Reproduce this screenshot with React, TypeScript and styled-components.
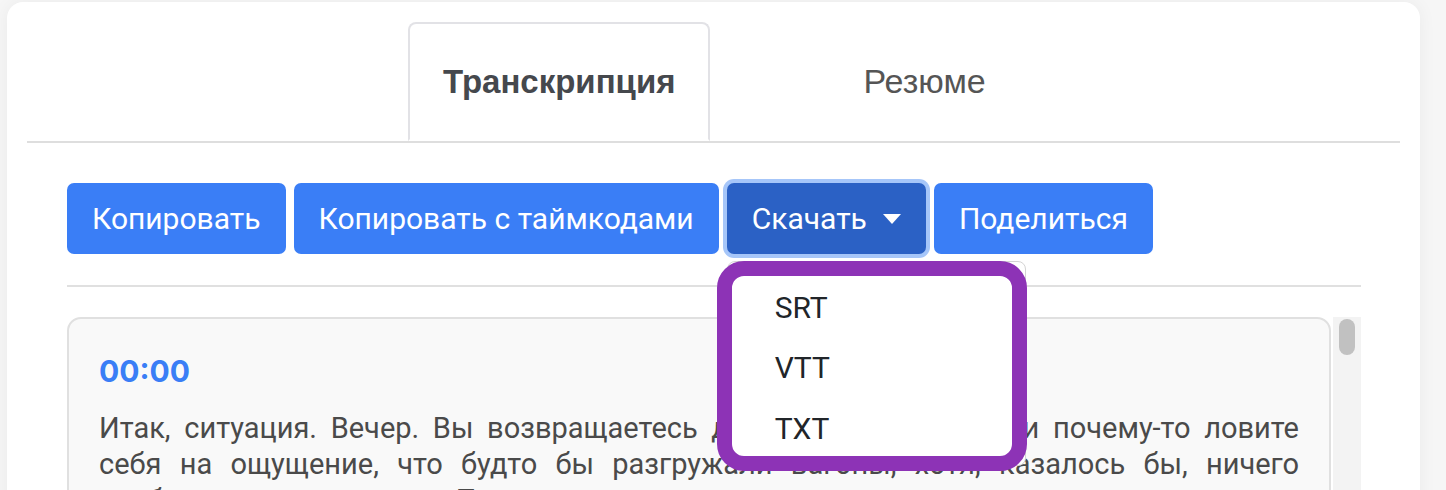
import React, { useState } from 'react';
import styled, { createGlobalStyle } from 'styled-components';

const GlobalStyle = createGlobalStyle`
  html, body {
    margin: 0;
    padding: 0;
    background: #f6f6f6;
    font-family: Roboto, "Noto Sans", sans-serif;
    overflow: hidden;
  }
`;

const Page = styled.div`
  padding: 2px 26px 0 7px;
  height: 488px;
  overflow: hidden;
`;

const Card = styled.div`
  background: #fff;
  border-radius: 16px;
  box-shadow: 0 0 18px rgba(0, 0, 0, 0.05);
  padding: 20px 20px 0 20px;
  min-height: 600px;
`;

// tabs
const TabBar = styled.div`
  display: flex;
  border-bottom: 2px solid #dedede;
  padding-left: 381px;
`;

const Tab = styled.div<{ $active?: boolean }>`
  height: 119px;
  display: flex;
  align-items: center;
  justify-content: center;
  box-sizing: border-box;
  font-family: "Liberation Sans", Arial, sans-serif;
  font-size: ${(p) => (p.$active ? '33px' : '34px')};
  font-weight: ${(p) => (p.$active ? 700 : 400)};
  color: ${(p) => (p.$active ? '#45484d' : '#555')};
  padding: 0 33px;
  margin-bottom: ${(p) => (p.$active ? '-2px' : '0')};
  border: 2px solid ${(p) => (p.$active ? '#e2e2e6' : 'transparent')};
  border-bottom-color: ${(p) => (p.$active ? '#fff' : 'transparent')};
  border-radius: 8px 8px 0 0;
  background: ${(p) => (p.$active ? '#fff' : 'transparent')};
  & + & {
    margin-left: 118px;
  }
`;

// content
const Body = styled.div`
  padding: 40px 39px 0 40px;
`;

const Toolbar = styled.div`
  display: flex;
  gap: 8px;
  padding-bottom: 31px;
  border-bottom: 2px solid #e0e0e0;
`;

const Button = styled.button<{ $pressed?: boolean }>`
  height: 71px;
  box-sizing: border-box;
  border: none;
  border-radius: 7px;
  padding: 0 25px;
  font-family: Roboto, "Noto Sans", sans-serif;
  font-size: 30px;
  color: #fff;
  background: ${(p) => (p.$pressed ? '#2b61c5' : '#3a7ef6')};
  box-shadow: ${(p) => (p.$pressed ? '0 0 0 4px #a6c6f9' : 'none')};
  display: flex;
  align-items: center;
  cursor: pointer;
`;

const Caret = styled.span`
  width: 0;
  height: 0;
  margin-left: 16px;
  border-top: 10px solid #fff;
  border-left: 9px solid transparent;
  border-right: 9px solid transparent;
`;

const DropWrap = styled.div`
  position: relative;
`;

const Menu = styled.div`
  position: absolute;
  left: 0;
  top: 78px;
  width: 299px;
  height: 205px;
  box-sizing: border-box;
  background: #fff;
  border: 1px solid #d4d4d4;
  border-radius: 8px;
  padding-top: 15px;
  z-index: 5;
`;

const MenuItem = styled.div`
  height: 60.5px;
  display: flex;
  align-items: center;
  padding-left: 47px;
  font-family: Roboto, "Noto Sans", sans-serif;
  font-size: 30px;
  color: #212529;
`;

// purple highlight drawn on top of the menu
const Highlight = styled.div`
  position: absolute;
  left: -11px;
  top: -1px;
  width: 310px;
  height: 210px;
  box-sizing: border-box;
  border: 15px solid #8d33b6;
  border-radius: 27px;
  pointer-events: none;
`;

const TranscriptRow = styled.div`
  display: flex;
  margin-top: 30px;
  gap: 2px;
`;

const Transcript = styled.div`
  flex: 1;
  background: #f9f9f9;
  border: 2px solid #e0e0e0;
  border-radius: 14px;
  padding: 34px 30px 40px 30px;
`;

const Time = styled.div`
  font-family: Inter, "Noto Sans", sans-serif;
  font-weight: 700;
  font-size: 30px;
  color: #3a7ef6;
  margin-bottom: 21px;
`;

const Text = styled.p`
  margin: 0;
  font-family: Roboto, "Noto Sans", sans-serif;
  font-size: 29px;
  line-height: 36px;
  color: #4a4a4a;
  text-align: justify;
`;

const ScrollTrack = styled.div`
  width: 28px;
  background: #f3f3f3;
  display: flex;
  justify-content: center;
  padding-top: 2px;
`;

const ScrollThumb = styled.div`
  width: 16px;
  height: 36px;
  border-radius: 8px;
  background: #c1c1c1;
`;

const formats = ['SRT', 'VTT', 'TXT'];

export default function App() {
  const [open] = useState(true);
  return (
    <>
      <GlobalStyle />
      <Page>
        <Card>
          <TabBar>
            <Tab $active>Транскрипция</Tab>
            <Tab>Резюме</Tab>
          </TabBar>
          <Body>
            <Toolbar>
              <Button>Копировать</Button>
              <Button>Копировать с таймкодами</Button>
              <DropWrap>
                <Button $pressed>
                  Скачать
                  <Caret />
                </Button>
                {open && (
                  <Menu>
                    {formats.map((f) => (
                      <MenuItem key={f}>{f}</MenuItem>
                    ))}
                    <Highlight />
                  </Menu>
                )}
              </DropWrap>
              <Button>Поделиться</Button>
            </Toolbar>
            <TranscriptRow>
              <Transcript>
                <Time>00:00</Time>
                <Text>
                  Итак, ситуация. Вечер. Вы возвращаетесь домой после работы и почему-то ловите себя на
                  ощущение, что будто бы разгружали вагоны, хотя, казалось бы, ничего особенного не делали.
                  Просто сидели за компьютером, отвечали на письма и участвовали в созвонах.
                </Text>
              </Transcript>
              <ScrollTrack>
                <ScrollThumb />
              </ScrollTrack>
            </TranscriptRow>
          </Body>
        </Card>
      </Page>
    </>
  );
}
